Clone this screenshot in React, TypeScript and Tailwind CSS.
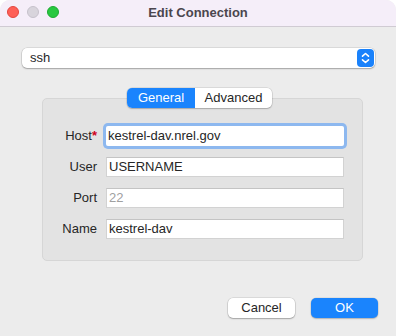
const rows = [
  { label: "Host", value: "kestrel-dav.nrel.gov", required: true, focused: true },
  { label: "User", value: "USERNAME" },
  { label: "Port", value: "", placeholder: "22" },
  { label: "Name", value: "kestrel-dav" },
];

export default function App() {
  return (
    <div
      className="w-[396px] h-[336px] bg-[#ececec] overflow-hidden rounded-t-[10px] text-[13px] text-[#262626]"
      style={{ fontFamily: '"Liberation Sans", Arial, sans-serif' }}
    >
      <div className="relative h-[27px] bg-[#f5eef9] border-b border-[#d0cbd3] flex items-center justify-center">
        <div className="absolute left-[7px] top-[6px] flex gap-[8px]">
          <span className="w-[12px] h-[12px] rounded-full bg-[#fe5f57] border border-[#e2463f]" />
          <span className="w-[12px] h-[12px] rounded-full bg-[#d8d4dc] border border-[#c6c1cb]" />
          <span className="w-[12px] h-[12px] rounded-full bg-[#28c840] border border-[#1eaa32]" />
        </div>
        <span className="font-bold text-[#4b464e] text-[13px]">Edit Connection</span>
      </div>

      <div className="px-[22px] pt-[21px] pr-[21px]">
        <div className="h-[20px] bg-white rounded-[5px] shadow-[0_0_0_0.5px_rgba(0,0,0,0.15),0_1px_1.5px_rgba(0,0,0,0.25)] flex items-center justify-between pl-[8px] pr-[1px]">
          <span>ssh</span>
          <span className="w-[17px] h-[18px] rounded-[4px] bg-[#1a82fb] flex items-center justify-center">
            <svg width="9" height="12" viewBox="0 0 9 12" fill="none" stroke="white" strokeWidth="1.6" strokeLinecap="round" strokeLinejoin="round">
              <path d="M1.5 4.2 L4.5 1.5 L7.5 4.2" />
              <path d="M1.5 7.8 L4.5 10.5 L7.5 7.8" />
            </svg>
          </span>
        </div>
      </div>

      <div className="flex justify-center mt-[20px] relative z-10">
        <div className="flex h-[20px] rounded-[5px] bg-white shadow-[0_0_0_0.5px_rgba(0,0,0,0.15),0_1px_1.5px_rgba(0,0,0,0.2)] overflow-hidden ml-[3px]">
          <span className="w-[68px] bg-[#1a84fd] text-white flex items-center justify-center">General</span>
          <span className="w-[77px] flex items-center justify-center">Advanced</span>
        </div>
      </div>

      <div className="mx-[42px] mr-[33px] -mt-[10px] h-[163px] bg-[#e3e3e3] border border-[#d6d6d6] rounded-[5px] pt-[27px] pr-[18px] flex flex-col gap-[11px]">
        {rows.map((r) => (
          <div key={r.label} className="flex items-center h-[20px]">
            <span className="w-[54px] text-right">
              {r.label}
              {r.required && <span className="text-[#d0021b] font-bold">*</span>}
            </span>
            <div
              className={
                "ml-[9px] flex-1 h-[20px] bg-white flex items-center pl-[2px] " +
                (r.focused
                  ? "ring-[3px] ring-[#8db8ef] rounded-[2px]"
                  : "border border-[#d2d2d2] border-t-[#c4c4c4]")
              }
            >
              {r.value ? (
                <span>{r.value}</span>
              ) : (
                <span className="text-[#a0a0a0]">{r.placeholder}</span>
              )}
            </div>
          </div>
        ))}
      </div>

      <div className="flex justify-end gap-[16px] pr-[18px] mt-[37px]">
        <button className="w-[67px] h-[20px] bg-white rounded-[5px] shadow-[0_0_0_0.5px_rgba(0,0,0,0.15),0_1px_1.5px_rgba(0,0,0,0.25)]">
          Cancel
        </button>
        <button className="w-[67px] h-[20px] bg-[#1a84fd] text-white rounded-[5px] shadow-[0_0_0_0.5px_rgba(0,0,0,0.1),0_1px_1.5px_rgba(0,0,0,0.2)]">
          OK
        </button>
      </div>
    </div>
  );
}
